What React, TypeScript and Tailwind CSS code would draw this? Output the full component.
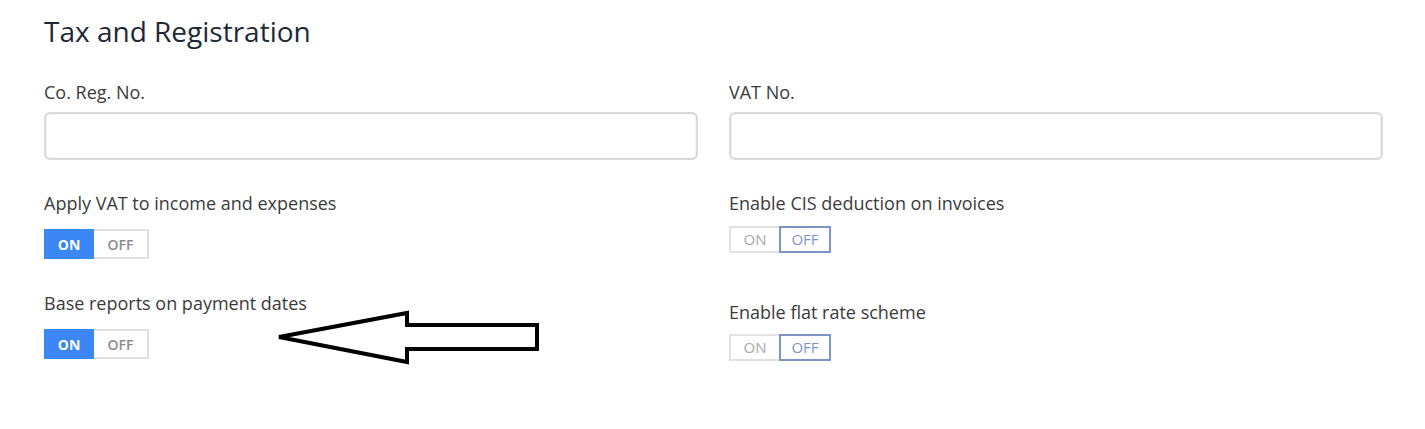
import React from "react";

function ToggleOn() {
  return (
    <div className="flex h-[30px] w-[105px] text-[14px] font-bold">
      <div className="flex w-[50px] items-center justify-center bg-[#3a87f5] text-white">ON</div>
      <div className="flex w-[55px] items-center justify-center border-2 border-l-0 border-[#e0e0e0] bg-white text-[#8c8c8c] font-semibold">OFF</div>
    </div>
  );
}

function ToggleOff() {
  return (
    <div className="flex h-[27px] w-[102px] text-[15px]">
      <div className="flex w-[50px] items-center justify-center border-2 border-r-0 border-[#e2e2e2] text-[#a8a8a8]">ON</div>
      <div className="flex w-[52px] items-center justify-center border-2 border-[#7d95c6] text-[#7d95c6]">OFF</div>
    </div>
  );
}

function Input() {
  return <div className="mt-[8px] h-[48px] w-full rounded-[6px] border-2 border-[#dadada] bg-white shadow-[inset_0_0_0_1px_#f4f4f4]" />;
}

export default function App() {
  return (
    <div
      className="relative h-[429px] w-[1425px] bg-white pl-[44px] pt-[12px] text-[#3b3b3b]"
      style={{ fontFamily: '"Open Sans", "Noto Sans", sans-serif' }}
    >
      <h1 className="text-[28px] leading-[38px] text-[#1f2936]">Tax and Registration</h1>
      <div className="mt-[30px] flex gap-[31px]">
        <div className="flex w-[654px] flex-col">
          <div className="text-[18px] leading-[24px]">Co. Reg. No.</div>
          <Input />
          <div className="mt-[31px] text-[18px] leading-[24px]">Apply VAT to income and expenses</div>
          <div className="mt-[14px]"><ToggleOn /></div>
          <div className="mt-[32px] text-[18px] leading-[24px]">Base reports on payment dates</div>
          <div className="mt-[14px]"><ToggleOn /></div>
        </div>
        <div className="flex w-[654px] flex-col">
          <div className="text-[18px] leading-[24px]">VAT No.</div>
          <Input />
          <div className="mt-[31px] text-[18px] leading-[24px]">Enable CIS deduction on invoices</div>
          <div className="mt-[11px]"><ToggleOff /></div>
          <div className="mt-[47px] text-[18px] leading-[24px]">Enable flat rate scheme</div>
          <div className="mt-[10px]"><ToggleOff /></div>
        </div>
      </div>
      <svg className="absolute left-0 top-0" width="1425" height="429" viewBox="0 0 1425 429" fill="none">
        <polygon
          points="279,337 407,313 407,325 537,325 537,349 407,349 407,362"
          stroke="#000"
          strokeWidth="4"
          strokeLinejoin="miter"
          fill="none"
        />
      </svg>
    </div>
  );
}
